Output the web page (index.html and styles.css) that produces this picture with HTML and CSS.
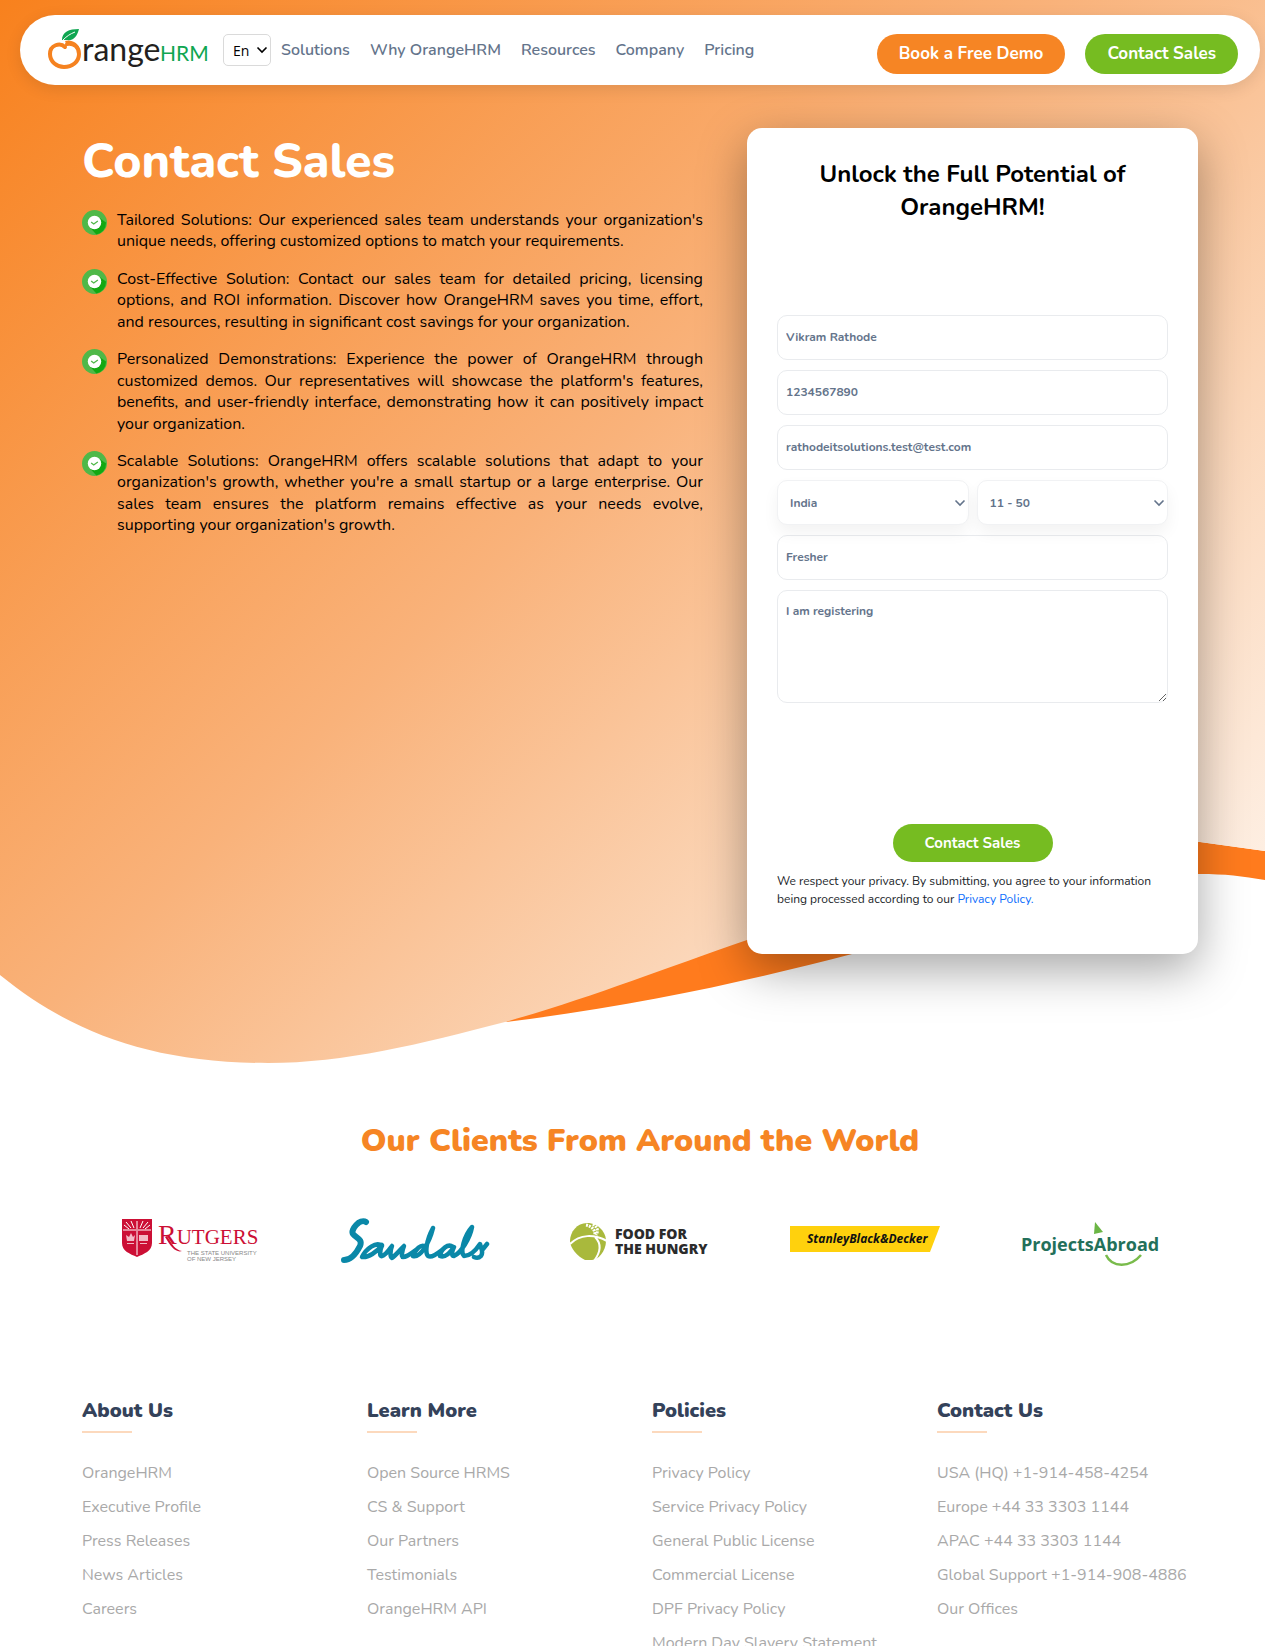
FILE: index.html
```html
<!DOCTYPE html>
<html lang="en">
<head>
<meta charset="utf-8">
<meta name="viewport" content="width=device-width, initial-scale=1">
<title>Contact Sales | OrangeHRM</title>
<link rel="stylesheet" href="styles.css">
</head>
<body>
<div class="page">
  <svg class="wave" viewBox="0 0 1280 1064" preserveAspectRatio="none" aria-hidden="true">
    <defs>
      <linearGradient id="sky" gradientUnits="userSpaceOnUse" x1="54" y1="-54" x2="1226" y2="1118">
        <stop offset="0" stop-color="#f8811d"/>
        <stop offset="0.45" stop-color="#f9b27a"/>
        <stop offset="0.7" stop-color="#fbd6b8"/>
        <stop offset="1" stop-color="#fffaf6"/>
      </linearGradient>
    </defs>
    <path fill="#ff7b1d" d="M505 1022C640 1006 760 978 852 954C1000 912 1080 868 1200 874C1230 874 1250 877 1280 883V853L1200 842L1000 830L700 940Z"/>
    <path fill="url(#sky)" d="M0 0H1280V853L1200 842C1060 826 900 892 747 940C660 970 590 998 505 1022C420 1044 345 1063 268 1063C150 1063 70 1032 0 975Z"/>
  </svg>

  <header class="topbar">
    <a class="brand" href="#" aria-label="OrangeHRM">
      <svg width="162" height="44" viewBox="0 0 162 44">
        <path fill="none" stroke="#f58220" stroke-width="4" stroke-linecap="round" d="M18 19C13 14 3 17 3 26C3 34 10 39 17 39C25 39 32 34 32 26C32 19 27 15 20 16"/>
        <path fill="#f58220" d="M18 13C24 11 32 15 33 22C29 17 25 15 20 17Z"/>
        <path fill="#0fa651" d="M15 12C15 4 22 1 32 1C30 9 26 13 20 12Z"/>
        <path stroke="#fff" fill="none" d="M16 12C20 8 23 6 28 4"/>
        <text class="brand-range" x="35" y="33">range</text>
        <text class="brand-hrm" x="113" y="33">HRM</text>
      </svg>
    </a>
    <span class="lang">
      <select aria-label="Language"><option>En</option></select>
      <svg class="chevron" width="12" height="8" viewBox="0 0 12 8"><path stroke-width="1.600" d="M1.500 1.500L6 6L10.500 1.500"/></svg>
    </span>
    <nav class="menu">
      <a href="#">Solutions</a>
      <a href="#">Why OrangeHRM</a>
      <a href="#">Resources</a>
      <a href="#">Company</a>
      <a href="#">Pricing</a>
    </nav>
    <div class="actions">
      <a class="pill pill-orange" href="#">Book a Free Demo</a>
      <a class="pill pill-green" href="#">Contact Sales</a>
    </div>
  </header>

  <svg class="defs" width="0" height="0" aria-hidden="true">
    <symbol id="tick" viewBox="0 0 26 26">
      <circle cx="13" cy="13" r="13" fill="#4fb848"/>
      <path fill="#12a812" d="M18 8L25 13A12.500 12.500 0 0 1 15 25.500L8 18Z"/>
      <circle cx="13" cy="13" r="7" fill="#fff"/>
      <path fill="none" stroke="#4fb848" stroke-width="1.400" d="M9.500 12.500L12.200 14.500L16.500 11.500"/>
    </symbol>
  </svg>

  <main class="container hero">
    <section class="pitch">
      <h1>Contact Sales</h1>
      <ul class="points">
        <li><svg class="tick"><use href="#tick"/></svg><p>Tailored Solutions: Our experienced sales team understands your organization's unique needs, offering customized options to match your requirements.</p></li>
        <li><svg class="tick"><use href="#tick"/></svg><p>Cost-Effective Solution: Contact our sales team for detailed pricing, licensing options, and ROI information. Discover how OrangeHRM saves you time, effort, and resources, resulting in significant cost savings for your organization.</p></li>
        <li><svg class="tick"><use href="#tick"/></svg><p>Personalized Demonstrations: Experience the power of OrangeHRM through customized demos. Our representatives will showcase the platform's features, benefits, and user-friendly interface, demonstrating how it can positively impact your organization.</p></li>
        <li><svg class="tick"><use href="#tick"/></svg><p>Scalable Solutions: OrangeHRM offers scalable solutions that adapt to your organization's growth, whether you're a small startup or a large enterprise. Our sales team ensures the platform remains effective as your needs evolve, supporting your organization's growth.</p></li>
      </ul>
    </section>

    <form class="card">
      <h2>Unlock the Full Potential of OrangeHRM!</h2>
      <div class="fields">
        <input class="field" type="text" aria-label="Full name" value="Vikram Rathode">
        <input class="field" type="tel" aria-label="Phone number" value="1234567890">
        <input class="field" type="email" aria-label="Email" value="rathodeitsolutions.test@test.com">
        <div class="pair">
          <span class="select">
            <select class="field" aria-label="Country"><option>India</option></select>
            <svg class="chevron" width="12" height="8" viewBox="0 0 12 8"><path stroke-width="1.600" d="M1.500 1.500L6 6L10.500 1.500"/></svg>
          </span>
          <span class="select">
            <select class="field" aria-label="Number of employees"><option>11 - 50</option></select>
            <svg class="chevron" width="12" height="8" viewBox="0 0 12 8"><path stroke-width="1.600" d="M1.500 1.500L6 6L10.500 1.500"/></svg>
          </span>
        </div>
        <input class="field" type="text" aria-label="Job title" value="Fresher">
        <textarea class="field message" aria-label="Message">I am registering</textarea>
      </div>
      <button class="submit" type="button">Contact Sales</button>
      <p class="privacy">We respect your privacy. By submitting, you agree to your information being processed according to our <a href="#">Privacy Policy.</a></p>
    </form>
  </main>

  <section class="clients">
    <h2>Our Clients From Around the World</h2>
    <div class="logos">
      <svg width="150" height="60" viewBox="0 0 150 60" role="img" aria-label="Rutgers">
        <path fill="#cc0f35" d="M7 9H37V33C37 41 29 44 22 47C15 44 7 41 7 33Z"/>
        <path stroke="#fff" stroke-width="1" fill="none" d="M8 20H36M22 21V45M22 19V11M19 18L16 11M25 18L28 11M16 18L11 12M28 18L33 12M14 19L9 15M30 19L35 15"/>
        <path fill="#f3b9c5" d="M11 25L14 27L16 23L18 27L20 25L19 31H12ZM24 25H33V31H24ZM12 33H19V34H12ZM25 33H32V34H25Z"/>
        <text class="rut" x="43" y="34"><tspan class="rut-cap">R</tspan>UTGERS</text>
        <path fill="#cc0f35" d="M52 26C57 34 60 40 67 41C61 43 56 37 50 27Z"/>
        <text class="rut-sub" x="72" y="45">THE STATE UNIVERSITY</text>
        <text class="rut-sub" x="72" y="51">OF NEW JERSEY</text>
      </svg>
      <svg width="150" height="60" viewBox="0 0 150 60" role="img" aria-label="Sandals">
        <g fill="none" stroke="#0a88a8" stroke-linecap="round" stroke-linejoin="round">
          <path stroke-width="6" d="M26 12C20 8 10 20 13 24C16 28 23 29 20 36C16 44 10 50 4 50"/>
          <path stroke-width="4.500" d="M42 36C36 31 26 39 22 47C28 48 37 42 42 35C39 43 40 47 42 46C46 45 49 40 52 36C50 41 50 47 52 48C56 45 61 39 64 36C62 41 61 47 63 47C67 47 72 43 76 40"/>
          <path stroke-width="4.500" d="M86 37C81 33 75 40 73 46C80 48 89 34 93 18C86 31 85 43 88 46C92 48 98 43 102 40M113 37C108 33 101 39 100 46C105 48 110 43 114 37C111 43 112 46 114 46C121 43 130 28 132 17C124 26 120 42 124 46C131 46 136 40 140 34C141 39 144 42 141 46C139 48 136 48 134 47M143 39L147 34"/>
        </g>
      </svg>
      <svg width="150" height="60" viewBox="-4 0 150 60" role="img" aria-label="Food for the Hungry">
        <path fill="#a9b93c" d="M19 13C31 13 38 23 38 31C38 41 30 50 24 50H17C10 47 2 38 2 31C2 22 9 13 19 13Z"/>
        <path fill="none" stroke="#fff" stroke-width="2" d="M2 34C12 24 26 24 39 31M27 27C34 34 32 43 26 51"/>
        <path fill="none" stroke="#fff" stroke-dasharray="2 1" stroke-width="3" d="M18 15C23 16 27 19 27 25M25 14C29 17 31 20 28 25"/>
        <text class="fh" x="47" y="29">FOOD FOR</text>
        <text class="fh" x="47" y="44">THE HUNGRY</text>
      </svg>
      <svg width="152" height="60" viewBox="0 0 152 60" role="img" aria-label="Stanley Black &amp; Decker">
        <path fill="#ffd10d" d="M2 16H152L142 42H2Z"/>
        <text class="sbd" x="19" y="33">StanleyBlack&amp;Decker</text>
      </svg>
      <svg width="150" height="60" viewBox="0 0 150 60" role="img" aria-label="Projects Abroad">
        <path fill="#6bb544" d="M80 12L88 22L79 24Z"/>
        <text class="pa" x="6" y="41">ProjectsAbroad</text>
        <path fill="none" stroke="#79bb4b" stroke-width="2.500" d="M91 45C97 58 115 58 126 45"/>
      </svg>
    </div>
  </section>

  <footer class="container footer">
    <section>
      <h3>About Us</h3>
      <ul>
        <li><a href="#">OrangeHRM</a></li>
        <li><a href="#">Executive Profile</a></li>
        <li><a href="#">Press Releases</a></li>
        <li><a href="#">News Articles</a></li>
        <li><a href="#">Careers</a></li>
      </ul>
    </section>
    <section>
      <h3>Learn More</h3>
      <ul>
        <li><a href="#">Open Source HRMS</a></li>
        <li><a href="#">CS &amp; Support</a></li>
        <li><a href="#">Our Partners</a></li>
        <li><a href="#">Testimonials</a></li>
        <li><a href="#">OrangeHRM API</a></li>
      </ul>
    </section>
    <section>
      <h3>Policies</h3>
      <ul>
        <li><a href="#">Privacy Policy</a></li>
        <li><a href="#">Service Privacy Policy</a></li>
        <li><a href="#">General Public License</a></li>
        <li><a href="#">Commercial License</a></li>
        <li><a href="#">DPF Privacy Policy</a></li>
        <li><a href="#">Modern Day Slavery Statement</a></li>
      </ul>
    </section>
    <section>
      <h3>Contact Us</h3>
      <ul>
        <li><a href="#">USA (HQ) +1-914-458-4254</a></li>
        <li><a href="#">Europe +44 33 3303 1144</a></li>
        <li><a href="#">APAC +44 33 3303 1144</a></li>
        <li><a href="#">Global Support +1-914-908-4886</a></li>
        <li><a href="#">Our Offices</a></li>
      </ul>
    </section>
  </footer>
</div>
</body>
</html>
```
FILE: styles.css
```css
* { box-sizing: border-box; }

body {
  margin: 0;
  overflow-x: hidden;
  background: #fff;
  color: #000;
  font-family: Nunito, "Open Sans", sans-serif;
  font-size: 16px;
}

h1, h2, h3, p, ul { margin: 0; padding: 0; }
ul { list-style: none; }
a { text-decoration: none; }

/* The layout runs under the 15px scrollbar gutter. */
.page {
  position: relative;
  margin-right: -15px;
  padding-top: 15px;
}

.wave {
  position: absolute;
  z-index: -1;
  top: 0;
  left: 0;
  width: 100%;
  height: 1064px;
}

.defs { position: absolute; }

.container {
  max-width: 1140px;
  margin: 0 auto;
  padding: 0 12px;
}

/* Header */
.topbar {
  display: flex;
  align-items: center;
  height: 70px;
  margin: 0 20px;
  padding: 0 22px 0 27px;
  border-radius: 35px;
  background: #fff;
  box-shadow: 0 4px 16px rgba(0, 0, 0, 0.1);
}

.brand { display: flex; }
.brand-range { font: 400 32px Lato, sans-serif; fill: #231f20; }
.brand-hrm { font: 400 21px Lato, sans-serif; fill: #0fa651; }

.lang { position: relative; margin: 0 10px 0 14px; }
.lang select {
  appearance: none;
  width: 48px;
  height: 32px;
  padding: 0 0 0 9px;
  border: 1px solid #dadada;
  border-radius: 5px;
  background: #fff;
  color: #000;
  font: 400 14px "Open Sans", sans-serif;
}
.lang .chevron { right: 3px; stroke: #000; }

.chevron {
  position: absolute;
  top: calc(50% - 4px);
  fill: none;
  stroke: #64748b;
  pointer-events: none;
}

.menu { display: flex; gap: 20px; white-space: nowrap; }
.menu a { color: #64748b; font-weight: 600; }

.actions { display: flex; gap: 20px; margin: 8px 0 0 auto; }
.pill {
  padding: 0 22px;
  border-radius: 20px;
  color: #fff;
  font-weight: 700;
  font-size: 17px;
  line-height: 40px;
}
.pill-orange { background: #f68524; }
.pill-green, .submit { background: #76bc21; }

/* Hero */
.hero {
  display: grid;
  grid-template-columns: minmax(0, 621px) minmax(0, 451px);
  justify-content: space-between;
  align-items: start;
  padding-top: 43px;
}

.pitch h1 {
  color: #fff;
  font-size: 48px;
  font-weight: 800;
  line-height: 67px;
}
.points { display: grid; gap: 16px; margin-top: 15px; }
.points li { display: flex; gap: 10px; }
.points p { flex: 1; line-height: 1.34; text-align: justify; }
.tick { flex: none; width: 25px; height: 25px; }

.card {
  display: flex;
  flex-direction: column;
  align-items: center;
  padding: 30px 30px 46px;
  border-radius: 15px;
  background: #fff;
  box-shadow: 0 16px 48px rgba(0, 0, 0, 0.35);
}
.card h2 {
  padding: 0 30px;
  font-size: 24px;
  font-weight: 700;
  line-height: 33px;
  text-align: center;
}

.fields { display: grid; gap: 10px; width: 100%; margin-top: 91px; }
.field {
  display: block;
  width: 100%;
  height: 45px;
  margin: 0;
  padding: 0 8px 1px;
  border: 1px solid #e9ebee;
  border-radius: 10px;
  background: #fff;
  color: #64748b;
  font-family: inherit;
  font-size: 12px;
  font-weight: 700;
}
.message { height: 113px; padding: 11px 8px; line-height: 18px; }
.pair { display: grid; grid-template-columns: 1fr 1fr; gap: 8px; }
.select { position: relative; }
.select .field {
  appearance: none;
  padding: 0 12px;
  border-color: #f1f2f4;
  box-shadow: 0 8px 16px rgba(0, 0, 0, 0.05);
}
.select .chevron { right: 3px; }

.submit {
  width: 160px;
  height: 38px;
  margin-top: 121px;
  border: 0;
  border-radius: 19px;
  color: #fff;
  font-family: inherit;
  font-size: 15px;
  font-weight: 700;
}
.privacy { margin-top: 10px; color: #212529; font-size: 12px; line-height: 18px; }
.privacy a { color: #0d6efd; }

/* Clients */
.clients { padding: 162px 78px 0; }
.clients h2 {
  color: #f68524;
  font-size: 32px;
  font-weight: 900;
  line-height: 50px;
  text-align: center;
}
.logos { display: flex; justify-content: space-around; margin-top: 44px; }

.rut { font: 21px "Liberation Serif", serif; fill: #cc0f35; }
.rut-cap { font-size: 28px; }
.rut-sub { font: 6px "Liberation Sans", sans-serif; fill: #888; }
.fh { font: 800 14px "Open Sans", sans-serif; fill: #2b2b2b; }
.sbd { font: italic 700 12px "Open Sans", sans-serif; fill: #111; }
.pa { font: 700 18px "Open Sans", sans-serif; fill: #23705a; }

/* Footer */
.footer {
  display: grid;
  grid-template-columns: repeat(4, minmax(0, 1fr));
  column-gap: 24px;
  margin-top: 126px;
  white-space: nowrap;
}
.footer h3 {
  color: #34425a;
  font-size: 20px;
  font-weight: 900;
  line-height: 30px;
}
.footer h3::after {
  display: block;
  width: 50px;
  height: 2px;
  margin-top: 5px;
  background: #fcd9bd;
  content: "";
}
.footer ul { margin-top: 23px; }
.footer li { line-height: 34px; }
.footer a { color: #a9a9a9; }
```
